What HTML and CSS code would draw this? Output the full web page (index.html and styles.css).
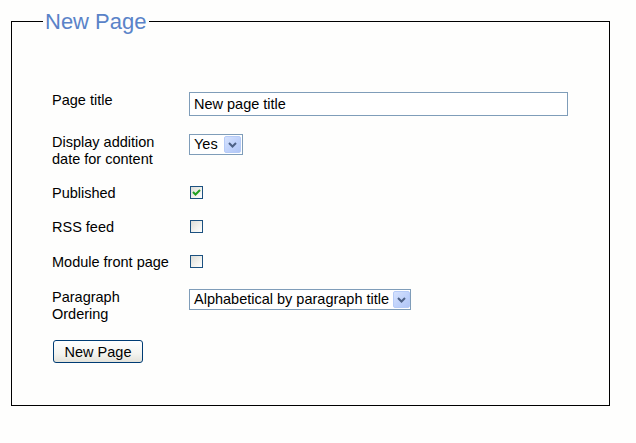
FILE: index.html
```html
<!DOCTYPE html>
<html>
<head>
<meta charset="utf-8">
<title>New Page</title>
<link rel="stylesheet" href="styles.css">
</head>
<body>
<fieldset class="box">
  <legend class="box-title">New Page</legend>
  <form class="form">
    <div class="row row-first">
      <label class="lbl">Page title</label>
      <input class="text" type="text" value="New page title">
    </div>
    <div class="row">
      <label class="lbl">Display addition date for content</label>
      <div class="select select-yes">
        <span class="select-text">Yes</span>
        <span class="select-arrow"><svg width="9" height="6" viewBox="0 0 9 6"><path d="M1 1 L4.5 4.5 L8 1" fill="none" stroke="#4d6185" stroke-width="2"/></svg></span>
      </div>
    </div>
    <div class="row">
      <label class="lbl">Published</label>
      <span class="check"><svg width="11" height="11" viewBox="0 0 11 11"><path d="M2 5 L4.5 7.5 L9 3" fill="none" stroke="#21a121" stroke-width="2"/></svg></span>
    </div>
    <div class="row">
      <label class="lbl">RSS feed</label>
      <span class="check"></span>
    </div>
    <div class="row row-shift">
      <label class="lbl">Module front page</label>
      <span class="check"></span>
    </div>
    <div class="row row-shift">
      <label class="lbl">Paragraph Ordering</label>
      <div class="select select-order">
        <span class="select-text">Alphabetical by paragraph title</span>
        <span class="select-arrow"><svg width="9" height="6" viewBox="0 0 9 6"><path d="M1 1 L4.5 4.5 L8 1" fill="none" stroke="#4d6185" stroke-width="2"/></svg></span>
      </div>
    </div>
    <div class="actions">
      <button class="btn" type="button">New Page</button>
    </div>
  </form>
</fieldset>
</body>
</html>
```

FILE: styles.css
```css
html, body {
  margin: 0;
  padding: 0;
  background: #fefefd;
}
body {
  font-family: "Liberation Sans", Arial, sans-serif;
  font-size: 14.5px;
  color: #000;
}
.box {
  box-sizing: border-box;
  width: 599px;
  height: 397px;
  margin: 9px 0 0 11px;
  padding: 0;
  border: 1px solid #000;
  min-inline-size: 0;
}
.box-title {
  margin-left: 31px;
  padding: 0 2px;
  font-size: 22px;
  line-height: 25px;
  color: #5a83c8;
}
.form {
  display: flex;
  flex-direction: column;
  gap: 17px;
  padding: 58px 0 0 40px;
}
.row {
  display: flex;
  align-items: flex-start;
  line-height: 17px;
}
.row-first {
  min-height: 25px;
}
.row-shift {
  margin-top: 1px;
}
.lbl {
  width: 118px;
  margin-right: 19px;
  flex: none;
}
.text {
  box-sizing: border-box;
  width: 379px;
  height: 24px;
  margin: 0;
  padding: 0 4px;
  border: 1px solid #7f9db9;
  background: #fff;
  font-family: "Liberation Sans", Arial, sans-serif;
  font-size: 14.5px;
  color: #000;
  outline: none;
}
.select {
  box-sizing: border-box;
  display: flex;
  align-items: center;
  height: 21px;
  border: 1px solid #7f9db9;
  background: #fff;
  padding: 0 1px 0 4px;
  gap: 4px;
}
.select-yes {
  width: 54px;
}
.select-order {
  width: 222px;
}
.select-text {
  flex: 1;
  white-space: nowrap;
  line-height: 17px;
}
.select-arrow {
  box-sizing: border-box;
  width: 17px;
  height: 17px;
  display: flex;
  align-items: center;
  justify-content: center;
  border: 1px solid #b6cbf7;
  border-radius: 2px;
  background: linear-gradient(135deg, #d6e2fd 0%, #c1d3fb 50%, #b1c6f6 100%);
  flex: none;
}
.check {
  box-sizing: border-box;
  width: 13px;
  height: 13px;
  margin: 1px 0 0 1px;
  border: 1px solid #1c5180;
  background: linear-gradient(135deg, #dcdcd7 0%, #f3f3ef 60%, #ffffff 100%);
  display: flex;
  align-items: center;
  justify-content: center;
}
.actions {
  display: flex;
}
.btn {
  box-sizing: border-box;
  width: 90px;
  height: 23px;
  margin-left: 1px;
  padding: 0;
  border: 1px solid #003c74;
  border-radius: 3px;
  background: linear-gradient(180deg, #ffffff 0%, #f4f4f0 60%, #e3e2da 100%);
  font-family: "Liberation Sans", Arial, sans-serif;
  font-size: 14.5px;
  color: #000;
}
```
